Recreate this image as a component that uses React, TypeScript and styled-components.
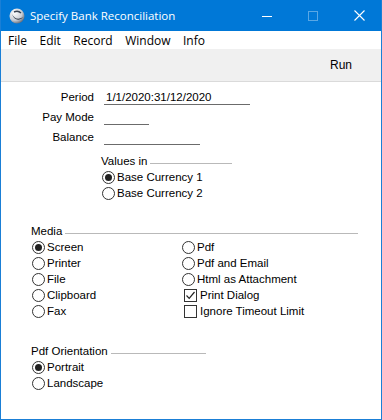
import styled, { createGlobalStyle } from 'styled-components'

const GlobalStyle = createGlobalStyle`
  html, body {
    margin: 0;
    padding: 0;
    background: #ffffff;
  }
  * {
    box-sizing: border-box;
  }
`

const Window = styled.div`
  width: 382px;
  height: 420px;
  display: flex;
  flex-direction: column;
  background: #ffffff;
  border: 1px solid #1a7fd6;
  border-top: none;
  font-family: 'Liberation Sans', Arial, sans-serif;
  font-size: 11.5px;
  color: #000;
  overflow: hidden;
`

const TitleBar = styled.div`
  height: 31px;
  margin: 0 -1px;
  background: #0078d7;
  color: #fff;
  display: flex;
  align-items: center;
  padding-left: 9px;
  font-family: 'Open Sans', sans-serif;
  font-size: 11.5px;
`

const TitleText = styled.span`
  margin-left: 5px;
  flex: 1;
`

const TitleButton = styled.div<{ $dim?: boolean }>`
  width: 46px;
  height: 31px;
  display: flex;
  align-items: center;
  justify-content: center;
  opacity: ${(p) => (p.$dim ? 0.35 : 1)};
`

const MenuBar = styled.div`
  height: 18px;
  display: flex;
  align-items: center;
  padding-left: 7px;
  font-family: 'Open Sans', sans-serif;
  font-size: 12px;
`

const MenuItem = styled.span`
  padding-right: 12.5px;
`

const Toolbar = styled.div`
  height: 33px;
  background: #f0f0f0;
  border-bottom: 1px solid #dadada;
  display: flex;
  align-items: center;
  justify-content: flex-end;
  padding-right: 29px;
  font-size: 12px;
`

const Body = styled.div`
  flex: 1;
  padding: 5px 0 0 0;
  display: flex;
  flex-direction: column;
`

const FieldRow = styled.div`
  height: 20px;
  display: flex;
  align-items: center;
`

const Label = styled.div`
  width: 93px;
  text-align: right;
`

const Field = styled.div<{ $w: number }>`
  width: ${(p) => p.$w}px;
  margin-left: 10px;
  height: 15px;
  border-bottom: 1px solid #6b6b6b;
  padding-left: 2px;
  line-height: 14px;
`

const Group = styled.div<{ $left: number; $top: number }>`
  margin-left: ${(p) => p.$left}px;
  margin-top: ${(p) => p.$top}px;
  display: flex;
  flex-direction: column;
`

const GroupHeader = styled.div<{ $line: number }>`
  height: 16px;
  display: flex;
  align-items: center;
  gap: 3px;

  &::after {
    content: '';
    display: block;
    width: ${(p) => p.$line}px;
    height: 1px;
    margin-top: 4px;
    background: #b9b9b9;
  }
`

const Columns = styled.div`
  display: grid;
  grid-template-columns: 150px 1fr;
`

const Column = styled.div`
  display: flex;
  flex-direction: column;
`

const Option = styled.div`
  height: 16px;
  display: flex;
  align-items: center;
  gap: 2px;
  white-space: nowrap;
`

const RadioCircle = styled.span<{ $on?: boolean }>`
  width: 13px;
  height: 13px;
  margin-left: 1px;
  border: 1px solid #333;
  border-radius: 50%;
  display: flex;
  align-items: center;
  justify-content: center;

  &::after {
    content: '';
    width: 7px;
    height: 7px;
    border-radius: 50%;
    background: ${(p) => (p.$on ? '#222' : 'transparent')};
  }
`

const CheckBox = styled.span`
  width: 13px;
  height: 13px;
  margin-left: 3px;
  margin-right: 1px;
  border: 1px solid #333;
  display: flex;
  align-items: center;
  justify-content: center;
`

const Radio = ({ on, children }: { on?: boolean; children: string }) => (
  <Option>
    <RadioCircle $on={on} />
    {children}
  </Option>
)

const Check = ({ on, children }: { on?: boolean; children: string }) => (
  <Option>
    <CheckBox>
      {on && (
        <svg width="11" height="11" viewBox="0 0 11 11">
          <path d="M1.5 5.5 L4.2 8.3 L9.5 2" fill="none" stroke="#222" strokeWidth="1.2" />
        </svg>
      )}
    </CheckBox>
    {children}
  </Option>
)

const AppIcon = () => (
  <svg width="16" height="16" viewBox="0 0 16 16">
    <defs>
      <radialGradient id="g" cx="0.35" cy="0.3" r="0.8">
        <stop offset="0" stopColor="#ffffff" />
        <stop offset="0.6" stopColor="#c9ced6" />
        <stop offset="1" stopColor="#4a5566" />
      </radialGradient>
    </defs>
    <circle cx="8" cy="8" r="7.5" fill="url(#g)" />
    <path d="M3 6 C5 11, 10 12, 14 9 C11 13, 5 13, 3 6 Z" fill="#2b3440" />
    <path d="M5 4 C7 3, 10 3, 12 5" fill="none" stroke="#3a4452" strokeWidth="1.4" />
  </svg>
)

export default function App() {
  return (
    <>
      <GlobalStyle />
      <Window>
        <TitleBar>
          <AppIcon />
          <TitleText>Specify Bank Reconciliation</TitleText>
          <TitleButton>
            <svg width="10" height="10" viewBox="0 0 10 10">
              <path d="M0 5.5 H10" stroke="#fff" strokeWidth="1" />
            </svg>
          </TitleButton>
          <TitleButton $dim>
            <svg width="10" height="10" viewBox="0 0 10 10">
              <rect x="0.5" y="0.5" width="9" height="9" fill="none" stroke="#fff" strokeWidth="1" />
            </svg>
          </TitleButton>
          <TitleButton>
            <svg width="11" height="11" viewBox="0 0 11 11">
              <path d="M0.5 0.5 L10.5 10.5 M10.5 0.5 L0.5 10.5" stroke="#fff" strokeWidth="1.1" />
            </svg>
          </TitleButton>
        </TitleBar>
        <MenuBar>
          <MenuItem>File</MenuItem>
          <MenuItem>Edit</MenuItem>
          <MenuItem>Record</MenuItem>
          <MenuItem>Window</MenuItem>
          <MenuItem>Info</MenuItem>
        </MenuBar>
        <Toolbar>Run</Toolbar>
        <Body>
          <FieldRow>
            <Label>Period</Label>
            <Field $w={146}>1/1/2020:31/12/2020</Field>
          </FieldRow>
          <FieldRow>
            <Label>Pay Mode</Label>
            <Field $w={45} />
          </FieldRow>
          <FieldRow>
            <Label>Balance</Label>
            <Field $w={96} />
          </FieldRow>
          <Group $left={100} $top={6}>
            <GroupHeader $line={82}>Values in</GroupHeader>
            <Radio on>Base Currency 1</Radio>
            <Radio>Base Currency 2</Radio>
          </Group>
          <Group $left={30} $top={22}>
            <GroupHeader $line={293}>Media</GroupHeader>
            <Columns>
              <Column>
                <Radio on>Screen</Radio>
                <Radio>Printer</Radio>
                <Radio>File</Radio>
                <Radio>Clipboard</Radio>
                <Radio>Fax</Radio>
              </Column>
              <Column>
                <Radio>Pdf</Radio>
                <Radio>Pdf and Email</Radio>
                <Radio>Html as Attachment</Radio>
                <Check on>Print Dialog</Check>
                <Check>Ignore Timeout Limit</Check>
              </Column>
            </Columns>
          </Group>
          <Group $left={30} $top={24}>
            <GroupHeader $line={95}>Pdf Orientation</GroupHeader>
            <Radio on>Portrait</Radio>
            <Radio>Landscape</Radio>
          </Group>
        </Body>
      </Window>
    </>
  )
}
